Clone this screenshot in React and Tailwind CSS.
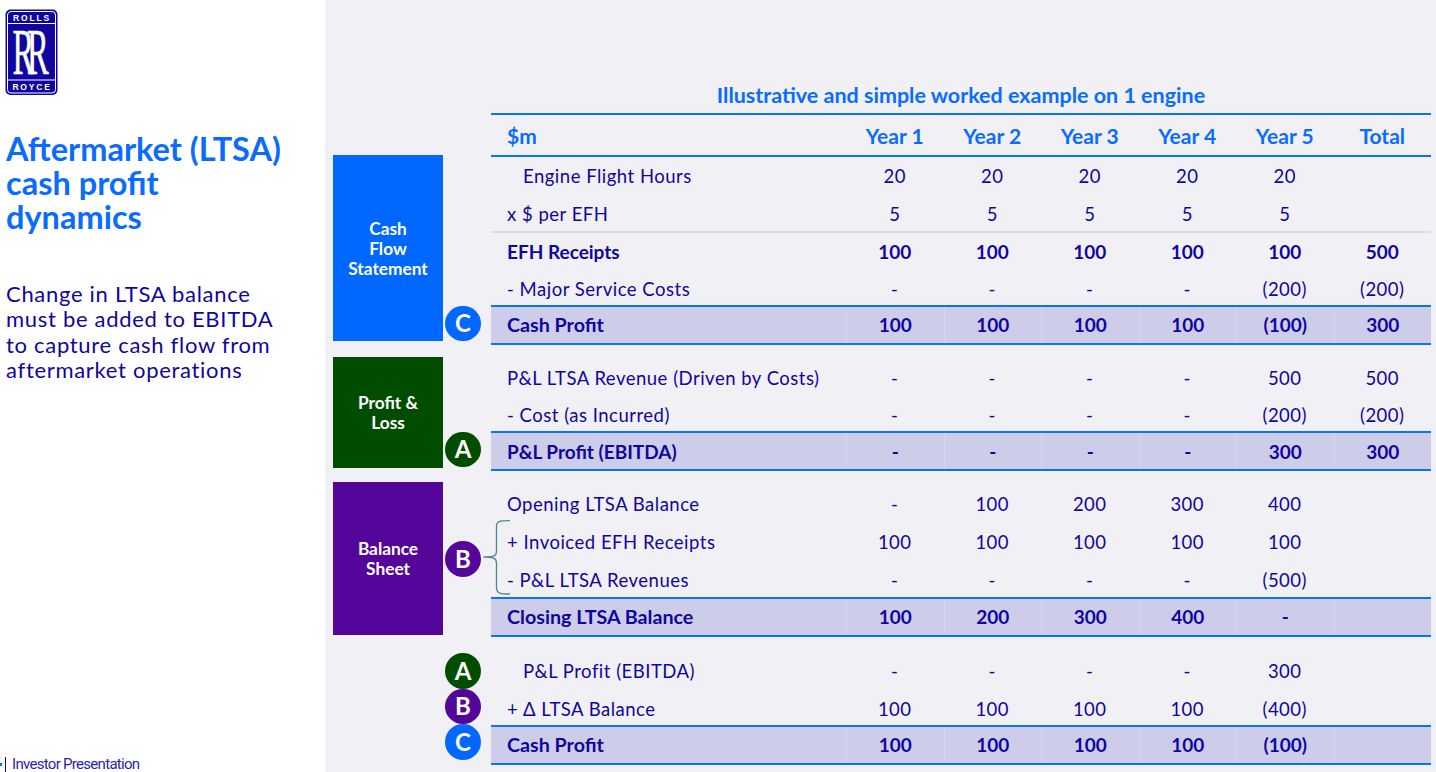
const YEARS = ["Year 1", "Year 2", "Year 3", "Year 4", "Year 5", "Total"];

const SECTIONS = [
  {
    label: ["Cash", "Flow", "Statement"],
    tile: "bg-[#0067ff] h-[186px] mt-[-2px] pt-[1px]",
    badges: [{ letter: "C", color: "bg-[#0067ff]" }],
    badgeAlign: "justify-end pb-[4px]",
    rows: [
      { name: "Engine Flight Hours", indent: true, values: ["20", "20", "20", "20", "20", ""], h: "h-[38px]" },
      { name: "x $ per EFH", values: ["5", "5", "5", "5", "5", ""], h: "h-[36px]", pad: "pt-[4px]" },
      { divider: true },
      { name: "EFH Receipts", bold: true, values: ["100", "100", "100", "100", "100", "500"], h: "h-[37px]" },
      { name: "- Major Service Costs", values: ["-", "-", "-", "-", "(200)", "(200)"], h: "h-[35px]", pad: "pt-[5px]" },
      { name: "Cash Profit", total: true, values: ["100", "100", "100", "100", "(100)", "300"] },
    ],
  },
  {
    label: ["Profit &", "Loss"],
    tile: "bg-[#004d00] h-[111px] mt-[-2px] pt-[1px]",
    gap: "mt-[14px]",
    badges: [{ letter: "A", color: "bg-[#004d00]" }],
    badgeAlign: "justify-end pb-[4px]",
    rows: [
      { name: "P&L LTSA Revenue (Driven by Costs)", values: ["-", "-", "-", "-", "500", "500"], h: "h-[37px]" },
      { name: "- Cost (as Incurred)", values: ["-", "-", "-", "-", "(200)", "(200)"], h: "h-[35px]", pad: "pt-[4px]" },
      { name: "P&L Profit (EBITDA)", total: true, small: true, values: ["-", "-", "-", "-", "300", "300"] },
    ],
  },
  {
    label: ["Balance", "Sheet"],
    tile: "bg-[#54069a] h-[153px] mt-[-3px] pt-[1px]",
    gap: "mt-[14px]",
    badges: [{ letter: "B", color: "bg-[#54069a]" }],
    badgeAlign: "justify-center pb-[4px]",
    brace: true,
    rows: [
      { name: "Opening LTSA Balance", values: ["-", "100", "200", "300", "400", ""], h: "h-[38px]" },
      { name: "+ Invoiced EFH Receipts", values: ["100", "100", "100", "100", "100", ""], h: "h-[38px]" },
      { name: "- P&L LTSA Revenues", values: ["-", "-", "-", "-", "(500)", ""], h: "h-[36px]", pad: "pt-[4px]" },
      { name: "Closing LTSA Balance", total: true, values: ["100", "200", "300", "400", "-", ""] },
    ],
  },
  {
    gap: "mt-[15px]",
    badges: [
      { letter: "A", color: "bg-[#004d00]" },
      { letter: "B", color: "bg-[#54069a]" },
      { letter: "C", color: "bg-[#0067ff]" },
    ],
    badgeAlign: "justify-start pt-[1px]",
    rows: [
      { name: "P&L Profit (EBITDA)", indent: true, values: ["-", "-", "-", "-", "300", ""], h: "h-[38px]" },
      { name: "+ Δ LTSA Balance", values: ["100", "100", "100", "100", "(400)", ""], h: "h-[35px]", pad: "pt-[5px]" },
      { name: "Cash Profit", total: true, values: ["100", "100", "100", "100", "(100)", ""] },
    ],
  },
];

function Logo() {
  return (
    <svg width="54" height="87" viewBox="0 0 54 87" className="block">
      <rect x="0.5" y="0.5" width="52" height="85.500" rx="5" fill="#10069f" />
      <rect x="2.500" y="2.500" width="48" height="81.500" rx="3.500" fill="none" stroke="#fff" strokeWidth="1" />
      <path d="M3 14.500H50M3 71H50" stroke="#fff" strokeWidth="1" />
      <text x="27" y="12.300" textAnchor="middle" fill="#fff" fontSize="8.500" fontWeight="700" letterSpacing="1.800" fontFamily="'Liberation Sans', sans-serif">ROLLS</text>
      <text x="27" y="81" textAnchor="middle" fill="#fff" fontSize="8.500" fontWeight="700" letterSpacing="1.800" fontFamily="'Liberation Sans', sans-serif">ROYCE</text>
      <g fill="#fff" stroke="#fff" strokeWidth="0.500" fontFamily="'Liberation Serif', serif" fontSize="65">
        <text transform="translate(7.500 65) scale(0.5 1)">R</text>
        <text transform="translate(22 65) scale(0.5 1)">R</text>
      </g>
    </svg>
  );
}

function Brace() {
  return (
    <svg width="30" height="76" viewBox="0 0 30 76" className="absolute left-[-8px] top-[35px]">
      <path d="M27 0.700C18 0.700 13.500 0.500 13.500 6V31C13.500 36 11 37 0.500 37C11 37 13.500 38.500 13.500 43V68C13.500 73.500 18 74 27 74" fill="none" stroke="#4f8a8b" strokeWidth="1.300" />
    </svg>
  );
}

function Badge({ letter, color }) {
  return (
    <div className={`w-[36px] h-[35.500px] rounded-full flex items-center justify-center text-white font-bold text-[24px] leading-none ${color}`}>
      {letter}
    </div>
  );
}

function Row({ row }) {
  if (row.divider) return <div className="h-[2px] bg-[#dddde0]" />;

  if (row.total) {
    return (
      <div className="flex h-[40px] items-center border-y-2 border-[#0a74f8] bg-[#cdcce9] font-bold text-[#10069f] text-[19px]">
        <div className={`w-[355px] pl-[16px] h-full flex items-center ${row.small ? "text-[19px] pt-[2px]" : "text-[19.700px]"}`}>{row.name}</div>
        {row.values.map((v, i) => (
          <div key={i} className={`flex-1 h-full flex items-center justify-center border-l border-[#d6d5ed] ${row.small ? "pt-[2px]" : ""}`}>{v}</div>
        ))}
      </div>
    );
  }

  return (
    <div className={`flex items-center text-[#10069f] ${row.h} ${row.pad ?? "pt-[2px]"} ${row.bold ? "font-bold text-[19px]" : "text-[18.500px] tracking-[0.5px]"}`}>
      <div className={`w-[355px] ${row.indent ? "pl-[32px]" : "pl-[16px]"}`}>{row.name}</div>
      {row.values.map((v, i) => (
        <div key={i} className="flex-1 text-center">{v}</div>
      ))}
    </div>
  );
}

export default function App() {
  return (
    <div className="flex h-[772px] w-[1436px] overflow-hidden bg-white font-['Lato',sans-serif]">
      <aside className="w-[325px] shrink-0 flex flex-col pl-[5px] pt-[9px]">
        <Logo />
        <h1 className="mt-[36px] ml-[1px] text-[32.500px] leading-[34px] font-bold text-[#0a6cff]">
          Aftermarket (LTSA)<br />cash profit<br />dynamics
        </h1>
        <p className="mt-[47px] ml-[1px] text-[22px] leading-[25.300px] tracking-[0.7px] text-[#10069f]">
          Change in LTSA balance<br />must be added to EBITDA<br />to capture cash flow from<br />aftermarket operations
        </p>
        <div className="mt-auto flex items-center text-[15px] leading-[16px] tracking-[-0.7px] text-[#2a1fb0] font-['Roboto',sans-serif]">
          <span className="ml-[-5px] w-[2px] h-[3px] bg-[#0a6cff] mr-[3px]" />
          <span className="w-px h-[15px] bg-[#10069f] mr-[6px]" />
          Investor Presentation
        </div>
      </aside>

      <main className="flex-1 bg-[#f0f0f5] pl-[8px] pr-[5px] pt-[83px]">
        <div className="ml-[158px] text-center text-[21.500px] leading-[25px] font-bold text-[#0a6cff]">
          Illustrative and simple worked example on 1 engine
        </div>
        <div className="ml-[158px] mt-[5px] flex h-[44px] items-center border-y-2 border-[#0a74f8] pt-[2px] font-bold text-[21px] text-[#0a6cff]">
          <div className="w-[355px] pl-[16px]">$m</div>
          {YEARS.map((y) => (
            <div key={y} className="flex-1 text-center">{y}</div>
          ))}
        </div>

        {SECTIONS.map((section, i) => (
          <section key={i} className={`flex ${section.gap ?? ""}`}>
            <div className="w-[110px] shrink-0">
              {section.label && (
                <div className={`flex flex-col items-center justify-center text-white font-bold text-[17.300px] leading-[20px] ${section.tile}`}>
                  {section.label.map((line) => (
                    <span key={line}>{line}</span>
                  ))}
                </div>
              )}
            </div>
            <div className={`w-[48px] shrink-0 flex flex-col pl-[2px] ${section.badgeAlign}`}>
              {section.badges.map((b) => (
                <Badge key={b.letter} {...b} />
              ))}
            </div>
            <div className="relative flex-1 flex flex-col">
              {section.brace && <Brace />}
              {section.rows.map((row, j) => (
                <Row key={j} row={row} />
              ))}
            </div>
          </section>
        ))}
      </main>
    </div>
  );
}
